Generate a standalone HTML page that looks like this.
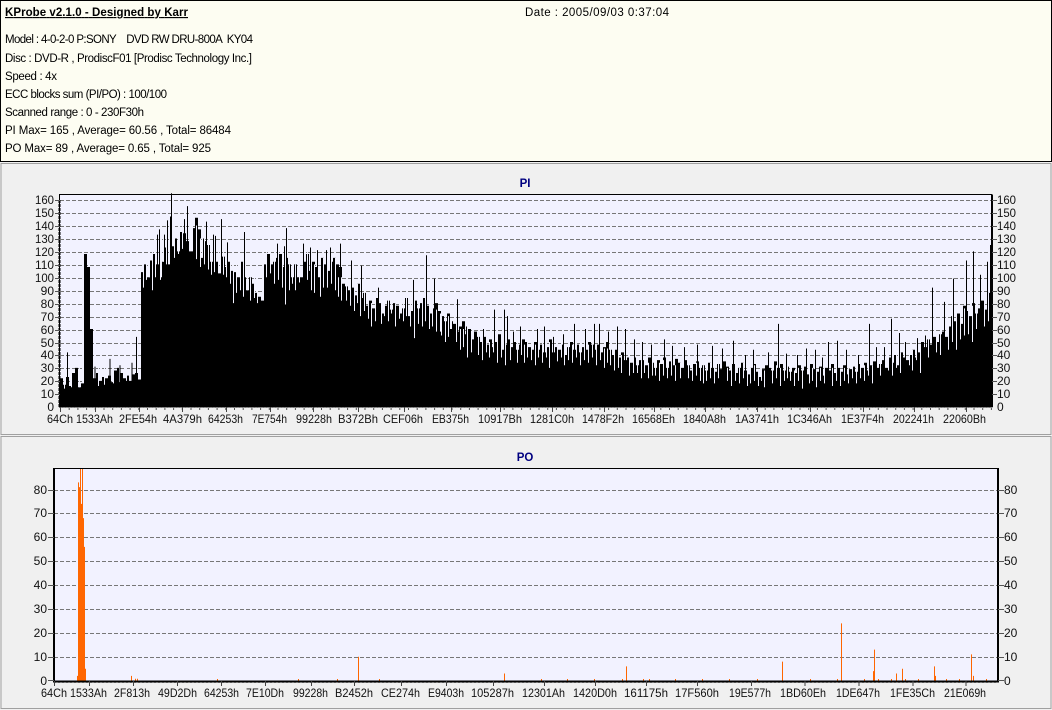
<!DOCTYPE html>
<html><head><meta charset="utf-8"><style>
html,body{margin:0;padding:0;background:#f0f0f0;width:1052px;height:710px;overflow:hidden}
svg{display:block}
text{font-family:"Liberation Sans",sans-serif;font-size:11.5px;fill:#000;white-space:pre}
.l{font-size:12px;fill:#111}
.t{font-size:11.5px;font-weight:bold;fill:#000080}
</style></head><body>
<svg width="1052" height="710" viewBox="0 0 1052 710" xmlns="http://www.w3.org/2000/svg">
<rect width="1052" height="710" fill="#f0f0f0"/>
<rect x="0.5" y="0.5" width="1051" height="161" fill="#fdfdf2" stroke="#000"/>
<text x="5" y="16" textLength="183" lengthAdjust="spacing" text-decoration="underline" style="font-weight:bold;font-size:11.5px">KProbe v2.1.0 - Designed by Karr</text>
<text x="525" y="16" textLength="144" lengthAdjust="spacing" style="font-size:11.5px">Date : 2005/09/03 0:37:04</text>
<text x="5" y="43" textLength="248" lengthAdjust="spacing">Model : 4-0-2-0 P:SONY    DVD RW DRU-800A  KY04</text>
<text x="5" y="62" textLength="247" lengthAdjust="spacing">Disc : DVD-R , ProdiscF01 [Prodisc Technology Inc.]</text>
<text x="5" y="80" textLength="52" lengthAdjust="spacing">Speed : 4x</text>
<text x="5" y="98" textLength="162" lengthAdjust="spacing">ECC blocks sum (PI/PO) : 100/100</text>
<text x="5" y="116" textLength="139" lengthAdjust="spacing">Scanned range : 0 - 230F30h</text>
<text x="5" y="134" textLength="226" lengthAdjust="spacing">PI Max= 165 , Average= 60.56 , Total= 86484</text>
<text x="5" y="152" textLength="206" lengthAdjust="spacing">PO Max= 89 , Average= 0.65 , Total= 925</text>

<rect x="1" y="163.5" width="1050" height="271" fill="#f0f0f0" stroke="#a0a0a0"/>
<rect x="1" y="436.5" width="1050" height="272" fill="#f0f0f0" stroke="#a0a0a0"/>

<!-- PI -->
<text class="t" x="525" y="187" text-anchor="middle">PI</text>
<rect x="60" y="195" width="932" height="212" fill="#f2f2ff"/>
<path d="M60 200.5H992M60 213.5H992M60 226.5H992M60 239.5H992M60 252.5H992M60 265.5H992M60 278.5H992M60 291.5H992M60 304.5H992M60 317.5H992M60 330.5H992M60 343.5H992M60 355.5H992M60 368.5H992M60 381.5H992M60 394.5H992" stroke="#777" stroke-dasharray="4 2" fill="none"/>
<g transform="translate(0,406.7) scale(1,-1.294)">
<path fill="#000" d="M60 0V22h3V17h3V23h3V16h3V26h3V30h3V15h3V18h3V118h3V108h3V60h3V22h3V26h3V20h3V23h3V22h3V24h3V19h3V28h3V30h3V26h3V22h3V24h3V20h3V25h3V26h3V21h3V104h3V110h3V100h3V113h3V118h3V110h3V100h3V112h3V123h3V110h3V124h3V130h3V120h3V135h3V134h3V128h3V120h3V138h3V146h3V137h3V115h3V128h3V125h3V112h3V110h3V112h3V103h3V116h3V108h3V112h3V105h3V104h3V100h3V112h3V100h3V90h3V100h3V95h3V88h3V85h3V82h3V110h3V118h3V110h3V112h3V115h3V118h3V108h3V115h3V110h3V100h3V110h3V100h3V100h3V112h3V118h3V105h3V112h3V108h3V100h3V115h3V110h3V105h3V112h3V115h3V110h3V108h3V95h3V93h3V90h3V92h3V86h3V95h3V84h3V88h3V78h3V82h3V76h3V84h3V80h3V72h3V78h3V82h3V75h3V80h3V78h3V72h3V76h3V84h3V70h3V74h3V82h3V76h3V80h3V84h3V78h3V72h3V76h3V80h3V74h3V70h3V66h3V72h3V60h3V64h3V58h3V62h3V66h3V56h3V60h3V52h3V58h3V54h3V50h3V54h3V48h3V52h3V46h3V50h3V56h3V44h3V48h3V52h3V46h3V50h3V44h3V48h3V52h3V50h3V46h3V44h3V50h3V44h3V48h3V42h3V46h3V52h3V42h3V46h3V44h3V48h3V40h3V46h3V50h3V44h3V48h3V42h3V46h3V44h3V50h3V48h3V44h3V48h3V42h3V46h3V50h3V44h3V40h3V44h3V38h3V42h3V36h3V38h3V34h3V38h3V32h3V36h3V36h3V32h3V38h3V34h3V30h3V36h3V33h3V38h3V30h3V35h3V32h3V37h3V34h3V30h3V36h3V32h3V28h3V33h3V35h3V30h3V32h3V28h3V34h3V30h3V27h3V33h3V29h3V35h3V31h3V28h3V33h3V26h3V30h3V34h3V28h3V25h3V30h3V33h3V27h3V23h3V29h3V32h3V30h3V28h3V35h3V30h3V33h3V28h3V31h3V27h3V30h3V26h3V32h3V28h3V31h3V25h3V33h3V29h3V27h3V31h3V24h3V30h3V28h3V33h3V26h3V30h3V27h3V32h3V25h3V29h3V31h3V27h3V33h3V30h3V34h3V28h3V32h3V35h3V30h3V33h3V36h3V30h3V38h3V34h3V40h3V32h3V42h3V38h3V36h3V40h3V44h3V38h3V42h3V50h3V46h3V52h3V48h3V54h3V50h3V56h3V58h3V54h3V62h3V70h3V66h3V72h3V64h3V78h3V74h3V70h3V80h3V72h3V76h3V82h3V75h3V88h3V85H990V125H992V0Z"/>
<path stroke="#f2f2ff" stroke-width="1" fill="none" d="M64.5 14V30M71.5 15V30M79.5 15V30M98.5 16V30M104.5 17V30M113.5 18V30M119.5 19V35M126.5 20V35M143.5 92V115M146.5 98V115M149.5 100V125M152.5 90V125M155.5 100V125M160.5 98V125M163.5 112V130M166.5 110V135M169.5 118V140M174.5 115V140M178.5 118V140M182.5 122V140M189.5 125V150M192.5 120V150M196.5 114V140M200.5 108V130M204.5 110V130M208.5 106V125M211.5 102V120M214.5 104V125M218.5 103V120M223.5 102V120M226.5 100V118M230.5 95V115M233.5 80V110M236.5 88V110M240.5 90V115M243.5 85V110M247.5 90V105M250.5 82V100M254.5 84V100M257.5 80V95M262.5 85V110M266.5 100V125M270.5 103V120M274.5 95V120M278.5 98V120M282.5 92V120M285.5 79V125M289.5 90V110M292.5 95V115M295.5 90V110M299.5 96V115M303.5 92V120M307.5 98V120M311.5 90V120M314.5 88V110M320.5 85V105M323.5 92V115M327.5 92V115M331.5 95V115M335.5 90V115M338.5 85V100M341.5 82V100M346.5 82V100M350.5 78V95M354.5 74V95M357.5 80V95M360.5 70V85M364.5 74V90M368.5 68V85M371.5 62V80M375.5 66V85M378.5 70V85M381.5 64V80M384.5 70V85M388.5 66V85M391.5 72V85M395.5 62V80M399.5 68V85M403.5 66V85M406.5 70V85M410.5 62V85M414.5 53V85M418.5 64V85M422.5 62V85M425.5 66V85M429.5 60V85M432.5 62V85M436.5 58V75M440.5 58V72M441.5 55V70M445.5 50V70M448.5 54V70M452.5 46V65M456.5 50V65M460.5 44V60M463.5 46V60M467.5 38V60M471.5 42V55M474.5 38V55M478.5 40V55M482.5 36V50M486.5 42V55M489.5 38V50M493.5 42V55M497.5 34V50M501.5 38V50M505.5 32V50M510.5 36V50M513.5 40V55M517.5 34V50M521.5 40V55M524.5 34V48M527.5 38V50M531.5 36V50M535.5 32V48M538.5 38V50M542.5 34V50M546.5 38V50M549.5 30V50M553.5 36V48M557.5 35V48M561.5 38V50M564.5 32V48M568.5 36V50M572.5 34V48M576.5 38V50M580.5 32V48M584.5 36V50M588.5 34V48M592.5 38V50M596.5 32V48M600.5 36V48M604.5 30V45M607.5 34V45M610.5 32V48M614.5 28V42M618.5 30V42M621.5 26V40M625.5 28V40M629.5 24V38M633.5 26V38M637.5 26V38M641.5 22V36M644.5 26V38M648.5 22V34M652.5 24V36M655.5 24V36M659.5 20V34M663.5 24V36M667.5 22V34M671.5 24V36M675.5 20V32M680.5 22V34M684.5 18V32M688.5 22V34M692.5 20V32M696.5 24V34M700.5 20V32M703.5 18V32M706.5 20V32M710.5 22V34M714.5 18V30M718.5 22V34M722.5 20V30M727.5 20V30M731.5 16V30M735.5 20V32M739.5 18V30M743.5 22V34M747.5 16V30M750.5 18V30M754.5 20V32M758.5 16V28M761.5 20V30M764.5 15V28M768.5 20V30M772.5 18V30M776.5 22V32M780.5 16V30M784.5 20V32M787.5 22V32M790.5 20V30M794.5 16V28M798.5 20V30M802.5 14V28M806.5 20V30M809.5 18V30M812.5 20V30M816.5 15V28M820.5 20V30M824.5 18V30M828.5 22V32M832.5 16V30M836.5 20V30M840.5 16V28M844.5 20V30M848.5 18V30M852.5 22V32M856.5 18V30M860.5 22V34M864.5 20V32M868.5 24V34M872.5 18V32M876.5 22V32M880.5 24V36M884.5 22V36M888.5 28V40M892.5 24V40M896.5 30V42M900.5 26V42M905.5 24V38M909.5 32V46M912.5 28V44M916.5 36V50M920.5 26V48M925.5 34V50M928.5 38V54M932.5 34V52M936.5 42V58M940.5 40V58M944.5 46V62M948.5 44V68M952.5 50V72M956.5 44V70M960.5 52V72M964.5 55V76M968.5 56V76M972.5 50V78M976.5 60V80M980.5 62V80M984.5 62V82M988.5 66V88"/>
<path stroke="#000" stroke-width="1" fill="none" d="M67.5 0V42M95 0V31M110 0V37M120 0V32M132 0V34M136.5 0V54M157.5 0V133M159.5 0V137M164.5 0V133M167.5 0V144M170.5 0V147M171.5 0V165M184.5 0V145M187.5 0V155M203.5 0V130M206.5 0V143M213.5 0V133M215.5 0V132M221.5 0V145M227.5 0V127M244.5 0V135M277.5 0V126M284.5 0V124M286.5 0V138M303.5 0V126M310.5 0V123M317.5 0V121M326.5 0V121M330.5 0V123M340.5 0V126M351.5 0V113M361.5 0V109M378.5 0V92M413.5 0V98M426.5 0V117M434.5 0V99M457.5 0V83M494.5 0V75M504.5 0V75M507.5 0V70M574.5 0V64M594.5 0V64M599.5 0V64M625.5 0V60M642.5 0V50M664.5 0V52M733.5 0V51M778.5 0V64M828.5 0V50M837.5 0V51M869.5 0V64M891.5 0V68M899.5 0V57M932.5 0V92M944.5 0V81M953.5 0V99M966.5 0V113M973.5 0V120M980.5 0V102M987.5 0V112M452.5 0V66M466.5 0V62M474.5 0V58M483.5 0V60M513.5 0V58M520.5 0V62M537.5 0V60M544.5 0V62M553.5 0V54M563.5 0V56M585.5 0V60M608.5 0V58M617.5 0V62M634.5 0V52M651.5 0V48M672.5 0V47M684.5 0V46M697.5 0V48M712.5 0V47M722.5 0V45M745.5 0V40M753.5 0V44M768.5 0V42M786.5 0V41M797.5 0V40M806.5 0V45M815.5 0V44M822.5 0V38M846.5 0V44M858.5 0V40M876.5 0V46M884.5 0V46M905.5 0V50M917.5 0V53M925.5 0V55"/>
</g>
<rect x="59.5" y="194.5" width="932.5" height="212.5" fill="none" stroke="#000"/>
<path d="M59.5 200V407" stroke="#000" stroke-width="2" stroke-dasharray="3 1" fill="none"/>
<path d="M992 195V407" stroke="#000" stroke-width="2" fill="none"/>
<path d="M60 407.5H992" stroke="#888" stroke-dasharray="2 1" fill="none"/>
<path d="M60 409H992" stroke="#555" stroke-width="2" stroke-dasharray="1 7.7" fill="none"/>
<path d="M60.5 407V412M95.5 407V412M139.5 407V412M182.5 407V412M226.5 407V412M270.5 407V412M313.5 407V412M358.5 407V412M404.5 407V412M451.5 407V412M500.5 407V412M552.5 407V412M604.5 407V412M654.5 407V412M705.5 407V412M757.5 407V412M810.5 407V412M863.5 407V412M914.5 407V412M966.5 407V412" stroke="#444" fill="none"/>
<path d="M55 200.5H60M55 213.5H60M55 226.5H60M55 239.5H60M55 252.5H60M55 265.5H60M55 278.5H60M55 291.5H60M55 304.5H60M55 317.5H60M55 330.5H60M55 343.5H60M55 355.5H60M55 368.5H60M55 381.5H60M55 394.5H60M992 200.5H997M992 213.5H997M992 226.5H997M992 239.5H997M992 252.5H997M992 265.5H997M992 278.5H997M992 291.5H997M992 304.5H997M992 317.5H997M992 330.5H997M992 343.5H997M992 355.5H997M992 368.5H997M992 381.5H997M992 394.5H997" stroke="#555" fill="none"/>
<g text-anchor="end">
<text class="l" x="54" y="204" textLength="19" lengthAdjust="spacingAndGlyphs">160</text><text class="l" x="54" y="217" textLength="19" lengthAdjust="spacingAndGlyphs">150</text><text class="l" x="54" y="230" textLength="19" lengthAdjust="spacingAndGlyphs">140</text><text class="l" x="54" y="243" textLength="19" lengthAdjust="spacingAndGlyphs">130</text><text class="l" x="54" y="256" textLength="19" lengthAdjust="spacingAndGlyphs">120</text><text class="l" x="54" y="269" textLength="19" lengthAdjust="spacingAndGlyphs">110</text><text class="l" x="54" y="282" textLength="19" lengthAdjust="spacingAndGlyphs">100</text><text class="l" x="54" y="295">90</text><text class="l" x="54" y="308">80</text><text class="l" x="54" y="321">70</text><text class="l" x="54" y="334">60</text><text class="l" x="54" y="347">50</text><text class="l" x="54" y="359">40</text><text class="l" x="54" y="372">30</text><text class="l" x="54" y="385">20</text><text class="l" x="54" y="398">10</text><text class="l" x="54" y="411">0</text>
</g>
<g>
<text class="l" x="997" y="204" textLength="19" lengthAdjust="spacingAndGlyphs">160</text><text class="l" x="997" y="217" textLength="19" lengthAdjust="spacingAndGlyphs">150</text><text class="l" x="997" y="230" textLength="19" lengthAdjust="spacingAndGlyphs">140</text><text class="l" x="997" y="243" textLength="19" lengthAdjust="spacingAndGlyphs">130</text><text class="l" x="997" y="256" textLength="19" lengthAdjust="spacingAndGlyphs">120</text><text class="l" x="997" y="269" textLength="19" lengthAdjust="spacingAndGlyphs">110</text><text class="l" x="997" y="282" textLength="19" lengthAdjust="spacingAndGlyphs">100</text><text class="l" x="997" y="295">90</text><text class="l" x="997" y="308">80</text><text class="l" x="997" y="321">70</text><text class="l" x="997" y="334">60</text><text class="l" x="997" y="347">50</text><text class="l" x="997" y="359">40</text><text class="l" x="997" y="372">30</text><text class="l" x="997" y="385">20</text><text class="l" x="997" y="398">10</text><text class="l" x="997" y="411">0</text>
</g>
<g>
<text class="l" x="47" y="423" textLength="26" lengthAdjust="spacingAndGlyphs">64Ch</text>
<text class="l" x="76" y="423" textLength="37" lengthAdjust="spacingAndGlyphs">1533Ah</text>
<text class="l" x="119" y="423" textLength="38" lengthAdjust="spacingAndGlyphs">2FE54h</text>
<text class="l" x="163" y="423" textLength="39" lengthAdjust="spacingAndGlyphs">4A379h</text>
<text class="l" x="208" y="423" textLength="35" lengthAdjust="spacingAndGlyphs">64253h</text>
<text class="l" x="252" y="423" textLength="35" lengthAdjust="spacingAndGlyphs">7E754h</text>
<text class="l" x="296" y="423" textLength="36" lengthAdjust="spacingAndGlyphs">99228h</text>
<text class="l" x="338" y="423" textLength="40" lengthAdjust="spacingAndGlyphs">B372Bh</text>
<text class="l" x="383" y="423" textLength="40" lengthAdjust="spacingAndGlyphs">CEF06h</text>
<text class="l" x="432" y="423" textLength="37" lengthAdjust="spacingAndGlyphs">EB375h</text>
<text class="l" x="478" y="423" textLength="44" lengthAdjust="spacingAndGlyphs">10917Bh</text>
<text class="l" x="530" y="423" textLength="44" lengthAdjust="spacingAndGlyphs">1281C0h</text>
<text class="l" x="582" y="423" textLength="42" lengthAdjust="spacingAndGlyphs">1478F2h</text>
<text class="l" x="632" y="423" textLength="43" lengthAdjust="spacingAndGlyphs">16568Eh</text>
<text class="l" x="683" y="423" textLength="43" lengthAdjust="spacingAndGlyphs">1840A8h</text>
<text class="l" x="735" y="423" textLength="44" lengthAdjust="spacingAndGlyphs">1A3741h</text>
<text class="l" x="787" y="423" textLength="45" lengthAdjust="spacingAndGlyphs">1C346Ah</text>
<text class="l" x="841" y="423" textLength="43" lengthAdjust="spacingAndGlyphs">1E37F4h</text>
<text class="l" x="893" y="423" textLength="41" lengthAdjust="spacingAndGlyphs">202241h</text>
<text class="l" x="943" y="423" textLength="43" lengthAdjust="spacingAndGlyphs">22060Bh</text>
</g>

<!-- PO -->
<text class="t" x="525" y="461" text-anchor="middle">PO</text>
<rect x="54" y="468" width="944" height="213" fill="#f2f2ff"/>
<path d="M54 490.5H997M54 513.5H997M54 537.5H997M54 561.5H997M54 585.5H997M54 609.5H997M54 633.5H997M54 657.5H997" stroke="#777" stroke-dasharray="4 2" fill="none"/>
<g transform="translate(0,680.7) scale(1,-2.39)">
<path fill="#ff6600" d="M77 0V2H78V83H79V81H80V89H81V74H82V89H83V68H84V56H85V5H86V0Z"/>
<path stroke="#ff6600" fill="none" d="M131.5 0V2M135.5 0V.8M137.5 0V.8M217.5 0V.7M298.5 0V.7M337.5 0V.7M358.5 0V10M379.5 0V.7M504.5 0V3M541.5 0V.7M567.5 0V.7M594.5 0V.7M622.5 0V.7M626.5 0V6M643.5 0V.7M649.5 0V.7M675.5 0V.7M702.5 0V.7M729.5 0V.7M757.5 0V.7M782.5 0V8M810.5 0V.7M837.5 0V.7M841.5 0V24M864.5 0V.7M873.5 0V4M874.5 0V13M878.5 0V.7M891.5 0V.7M896.5 0V3M902.5 0V5M905.5 0V.7M918.5 0V.7M934.5 0V6M935.5 0V2M946.5 0V.7M959.5 0V.7M971.5 0V11M973.5 0V2M986.5 0V.7"/>
</g>
<path d="M54 468.5H998" stroke="#000" fill="none"/>
<path d="M54 468V681.5H998V468" stroke="#000" stroke-width="2" fill="none"/>
<path d="M54 682.5H998" stroke="#555" stroke-width="1" stroke-dasharray="2 2" fill="none"/>
<path d="M54.5 681V686M89.5 681V686M133.5 681V686M177.5 681V686M221.5 681V686M265.5 681V686M311.5 681V686M354.5 681V686M401.5 681V686M446.5 681V686M493.5 681V686M544.5 681V686M595.5 681V686M646.5 681V686M697.5 681V686M751.5 681V686M805 681V686M859 681V686M913 681V686M966 681V686" stroke="#444" fill="none"/>
<path d="M48 490.5H54M48 513.5H54M48 537.5H54M48 561.5H54M48 585.5H54M48 609.5H54M48 633.5H54M48 657.5H54M48 680.5H54M998 490.5H1004M998 513.5H1004M998 537.5H1004M998 561.5H1004M998 585.5H1004M998 609.5H1004M998 633.5H1004M998 657.5H1004M998 680.5H1004" stroke="#555" fill="none"/>
<g text-anchor="end">
<text class="l" x="47" y="494">80</text><text class="l" x="47" y="517">70</text><text class="l" x="47" y="541">60</text><text class="l" x="47" y="565">50</text><text class="l" x="47" y="589">40</text><text class="l" x="47" y="613">30</text><text class="l" x="47" y="637">20</text><text class="l" x="47" y="661">10</text><text class="l" x="47" y="685">0</text>
</g>
<g>
<text class="l" x="1004" y="494">80</text><text class="l" x="1004" y="517">70</text><text class="l" x="1004" y="541">60</text><text class="l" x="1004" y="565">50</text><text class="l" x="1004" y="589">40</text><text class="l" x="1004" y="613">30</text><text class="l" x="1004" y="637">20</text><text class="l" x="1004" y="661">10</text><text class="l" x="1004" y="685">0</text>
</g>
<g>
<text class="l" x="41" y="697" textLength="26" lengthAdjust="spacingAndGlyphs">64Ch</text>
<text class="l" x="70" y="697" textLength="37" lengthAdjust="spacingAndGlyphs">1533Ah</text>
<text class="l" x="114" y="697" textLength="36" lengthAdjust="spacingAndGlyphs">2F813h</text>
<text class="l" x="158" y="697" textLength="39" lengthAdjust="spacingAndGlyphs">49D2Dh</text>
<text class="l" x="204" y="697" textLength="35" lengthAdjust="spacingAndGlyphs">64253h</text>
<text class="l" x="246" y="697" textLength="38" lengthAdjust="spacingAndGlyphs">7E10Dh</text>
<text class="l" x="293" y="697" textLength="35" lengthAdjust="spacingAndGlyphs">99228h</text>
<text class="l" x="335" y="697" textLength="38" lengthAdjust="spacingAndGlyphs">B2452h</text>
<text class="l" x="381" y="697" textLength="39" lengthAdjust="spacingAndGlyphs">CE274h</text>
<text class="l" x="428" y="697" textLength="36" lengthAdjust="spacingAndGlyphs">E9403h</text>
<text class="l" x="471" y="697" textLength="43" lengthAdjust="spacingAndGlyphs">105287h</text>
<text class="l" x="522" y="697" textLength="43" lengthAdjust="spacingAndGlyphs">12301Ah</text>
<text class="l" x="573" y="697" textLength="44" lengthAdjust="spacingAndGlyphs">1420D0h</text>
<text class="l" x="624" y="697" textLength="44" lengthAdjust="spacingAndGlyphs">161175h</text>
<text class="l" x="675" y="697" textLength="44" lengthAdjust="spacingAndGlyphs">17F560h</text>
<text class="l" x="729" y="697" textLength="42" lengthAdjust="spacingAndGlyphs">19E577h</text>
<text class="l" x="780" y="697" textLength="46" lengthAdjust="spacingAndGlyphs">1BD60Eh</text>
<text class="l" x="836" y="697" textLength="44" lengthAdjust="spacingAndGlyphs">1DE647h</text>
<text class="l" x="890" y="697" textLength="45" lengthAdjust="spacingAndGlyphs">1FE35Ch</text>
<text class="l" x="944" y="697" textLength="42" lengthAdjust="spacingAndGlyphs">21E069h</text>
</g>
</svg>
</body></html>
